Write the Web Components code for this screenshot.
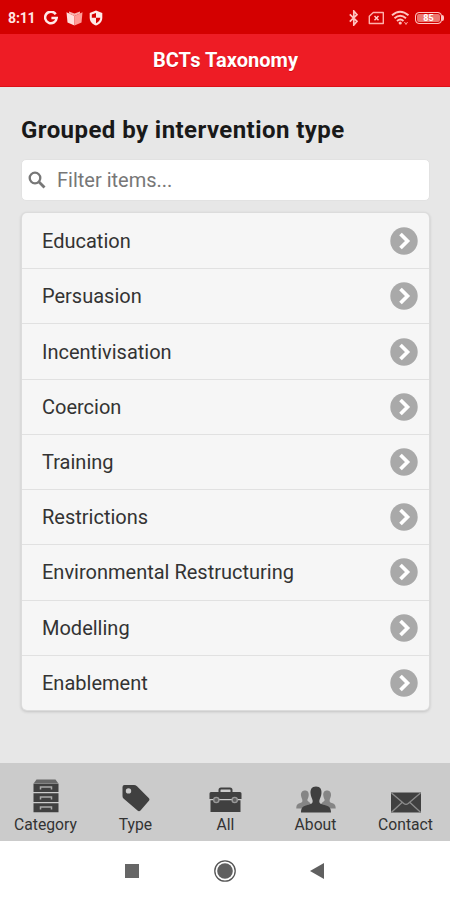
<!DOCTYPE html>
<html lang="en">
<head>
<meta charset="utf-8">
<title>BCTs Taxonomy</title>
<style>
html,body{margin:0;height:100%;background:#fff}
body{font-family:Roboto,"Liberation Sans",sans-serif;color:#333;overflow:hidden}
</style>
</head>
<body>
<taxonomy-app></taxonomy-app>
<script>
const define = (name, html) => customElements.define(name, class extends HTMLElement {
  constructor() {
    super();
    this.attachShadow({ mode: 'open' }).innerHTML = html;
  }
});

define('status-bar', `
<style>
:host{display:flex;height:34px;flex:none;box-sizing:border-box;background:#d40000;color:#ffe6e4;padding:1px 6px 0 8px;align-items:center;justify-content:space-between}
div{display:flex;align-items:center}
.time{font-size:14px;font-weight:700;width:28px;letter-spacing:-.15px;white-space:nowrap}
svg{display:block;flex:none}
.level{font:700 9px/10px Roboto,sans-serif;width:23px;height:10px;border:1.5px solid #ffc4c0;border-radius:4px;text-align:center;background:#ec7770;box-shadow:inset 0 0 0 1px #d40000;color:#fff}
.nub{width:2px;height:6px;background:#ffc4c0;border-radius:0 2px 2px 0}
</style>
<div>
 <span class="time">8:11</span>
 <svg style="margin-left:8px" width="14" height="14" viewBox="0 0 14 14"><path d="M11.700 3.200A5.800 5.800 0 1 0 12.700 7H7.400" fill="none" stroke="#ffe9e7" stroke-width="2.500"/></svg>
 <svg style="margin-left:8px" width="17" height="16" viewBox="0 0 17 16"><path d="M.5 2.300 8.500 6v9.500L1.500 12.400Z" fill="#ffe0dd"/><path d="M16.500 2.300 8.500 6v9.500l7-3.100Z" fill="#ff9c97"/><path d="m3 1.500 5.500 2 5.500-2v2L8.500 6 3 3.500Z" fill="#f9b1ac"/></svg>
 <svg style="margin-left:6px" width="14" height="16" viewBox="0 0 14 16"><path d="M7 .5 13.300 3v4.700c0 3.700-2.500 6.300-6.300 7.800C3.200 14 .7 11.400.7 7.700V3Z" fill="#ffe9e7"/><path d="M7 3v4.800H2.800V4.500ZM7 7.800h4.300c-.2 2.500-1.800 4.200-4.300 5.400Z" fill="#d40000"/></svg>
</div>
<div>
 <svg width="10" height="16" viewBox="0 0 10 16"><path d="m.8 4.300 7.200 7L4.800 15V1L8 4.700l-7.200 7" fill="none" stroke="#ffc4c0" stroke-width="1.700"/></svg>
 <svg style="margin-left:9px" width="17" height="14" viewBox="0 0 17 14"><path d="M5.300 1.500h10v11h-14V5.300Z" fill="none" stroke="#ffb0ab" stroke-width="1.400" stroke-linejoin="round"/><path d="m6.500 5 4 4.200m0-4.200-4 4.200" stroke="#ffd0cc" stroke-width="1.400"/></svg>
 <svg style="margin-left:6px" width="19" height="15" viewBox="0 0 19 15"><g fill="none" stroke="#ffc4c0" stroke-width="1.900"><path d="M1 5.300q8-7.300 16.500 0M3.500 8.200q5.700-5 11.500 0M6 11q3.200-3 6.500 0"/></g><circle cx="9.200" cy="13" r="1.600" fill="#ffc4c0"/><path d="m13.500 12 1.500 2.500 1.500-2.500" stroke="#ff9c97" fill="none" stroke-width="1"/></svg>
 <span class="level" style="margin-left:5px;width:25px">85</span><span class="nub"></span>
</div>`);

define('page-header', `
<style>
:host{display:flex;flex:none;height:53px;box-sizing:border-box;background:#ee1c25;border-bottom:1px solid #dc1118;color:#fff;align-items:center;justify-content:center;font-weight:700;font-size:20px;letter-spacing:.05px;text-shadow:0 1px 0 #d10b14}
span{margin-left:1px}
</style><span><slot></slot></span>`);

define('filter-box', `
<style>
:host{display:flex;height:42px;margin:0 -1px;box-sizing:border-box;border:1px solid #e2e2e2;border-radius:5px;background:#fff;align-items:center;color:#777;font-size:20px;padding:0 0 1px 6px}
svg{margin:0 11px 0 0;flex:none}
</style>
<svg width="18" height="18" viewBox="0 0 18 18"><circle cx="7" cy="7" r="5.300" fill="none" stroke="#777" stroke-width="2.300"/><path d="m10.800 10.800 5.700 5.700" stroke="#777" stroke-width="2.800"/></svg>
<slot></slot>`);

define('item-list', `
<style>
:host{display:grid;grid-auto-rows:1fr;height:497px;background:#f6f6f6;border-radius:5px;box-shadow:0 0 0 1px #dcdcdc,0 1px 3px 1px rgba(0,0,0,.16);overflow:hidden}
::slotted(list-item:not(:first-child)){border-top:1.500px solid #e1e1e1}
</style><slot></slot>`);

define('list-item', `
<style>
:host{display:flex;box-sizing:border-box;align-items:center;justify-content:space-between;padding:0 11px 0 20px;font-size:20px;color:#333}
svg{display:block;flex:none}
</style>
<span><slot></slot></span>
<svg width="28" height="28" viewBox="0 0 28 28"><circle cx="14" cy="14" r="13.700" fill="#a9a9a9"/><path d="m10.500 7 7 7-7 7" fill="none" stroke="#fff" stroke-width="3.700"/></svg>`);

define('tab-bar', `
<style>
:host{display:grid;grid-template-columns:repeat(5,1fr);height:78px;flex:none;background:#cbcbcb}
</style><slot></slot>`);

define('tab-item', `
<style>
:host{display:flex;flex-direction:column;align-items:center;justify-content:flex-end;padding:0 0 6px 1px;font-size:15.7px;line-height:20px;color:#333;white-space:nowrap}
.icon{height:40px;display:flex;align-items:flex-end;margin-bottom:2px}
</style>
<div class="icon"><slot name="icon"></slot></div><span><slot></slot></span>`);

define('system-nav', `
<style>
:host{display:flex;height:59px;flex:none;background:#fff;align-items:center;justify-content:center;gap:73px}
svg{display:block}
</style>
<svg width="16" height="16" viewBox="0 0 16 16"><path d="M1 1h14v14H1Z" fill="#666"/></svg>
<svg width="24" height="24" viewBox="0 0 24 24"><circle cx="12" cy="12" r="10.200" fill="none" stroke="#555" stroke-width="1.300"/><circle cx="12" cy="12" r="7.800" fill="#606060"/></svg>
<svg width="16" height="18" viewBox="0 0 16 18"><path d="M0 9 14 1v16Z" fill="#606060"/></svg>`);

define('taxonomy-app', `
<style>
:host{display:flex;flex-direction:column;width:450px;height:900px;background:#e7e7e7}
main{flex:1;padding:27px 21px 0 22px}
h1{margin:0 0 13px -1px;font-size:24px;letter-spacing:.43px;line-height:32px;font-weight:700;color:#191919;white-space:nowrap}
item-list{margin-top:12px}
</style>
<status-bar></status-bar>
<page-header>BCTs Taxonomy</page-header>
<main>
 <h1>Grouped by intervention type</h1>
 <filter-box>Filter items...</filter-box>
 <item-list>
  <list-item>Education</list-item><list-item>Persuasion</list-item><list-item>Incentivisation</list-item>
  <list-item>Coercion</list-item><list-item>Training</list-item><list-item>Restrictions</list-item>
  <list-item>Environmental Restructuring</list-item><list-item>Modelling</list-item><list-item>Enablement</list-item>
 </item-list>
</main>
<tab-bar>
 <tab-item>
  <svg slot="icon" width="26" height="34" viewBox="0 0 26 34"><path d="M3.500.5h19L25 4H1Z" fill="#686868"/><path d="M.5 4.500h25v8.500H.5Zm0 9.800h25v8.700H.5Zm0 10h25v9H.5Z" fill="#404040"/><g fill="none" stroke="#aaa" stroke-width="1.500"><path d="M7.500 10.500V8h11v2.500M7.500 20.500V18h11v2.500M7.500 30.500V28h11v2.500"/></g></svg>Category
 </tab-item>
 <tab-item>
  <svg slot="icon" width="28" height="29" viewBox="0 0 28 29"><path fill-rule="evenodd" d="M.5 3Q.5 1 2.500 1H12q1.500 0 3 1.300L26.700 14q1.500 1.500 0 3L18.500 26.500q-1.500 1.500-3 0L1.500 14.500Q.5 13.500.5 12ZM6.500 4.200a2.700 2.700 0 1 0 0 5.400 2.700 2.700 0 0 0 0-5.400Z" fill="#404040"/></svg>Type
 </tab-item>
 <tab-item>
  <svg slot="icon" width="33" height="26" viewBox="0 0 33 26"><path d="M10.500 5V3q0-1.500 1.500-1.500h9q1.500 0 1.500 1.500v2" fill="none" stroke="#404040" stroke-width="2"/><path d="M2 5h29q1.500 0 1.500 1.500V12h-6.200a3.800 3.800 0 0 0-1 0H7.700L.5 12V6.500Q.5 5 2 5ZM1.500 13.200h30V25h-30Z" fill="#404040"/><g fill="#606060" stroke="#999" stroke-width="1.400"><circle cx="7.300" cy="13" r="2.600"/><circle cx="25.700" cy="13" r="2.600"/></g></svg>All
 </tab-item>
 <tab-item>
  <svg slot="icon" width="40" height="27" viewBox="0 0 40 27"><g fill="#858585"><path d="M9 4.500c3 0 4 2.200 3.700 5-.2 2.200-1.200 3.300-1.400 4.600 0 1.700 4.700 2.200 4.700 8.400H.3c0-4.500 1.700-4.800 4-5.600 2-.7 2.300-1.400 2-3C6.200 12.500 5.200 11.500 5 9.500c-.3-2.800 1-5 4-5Z"/><path d="M31 4.500c-3 0-4 2.200-3.700 5 .2 2.200 1.200 3.300 1.400 4.600 0 1.700-4.700 2.200-4.700 8.400h15.700c0-4.500-1.700-4.800-4-5.600-2-.7-2.300-1.400-2-3 .1-1.400 1.100-2.400 1.300-4.400.3-2.800-1-5-4-5Z"/></g><path d="M20 .5c4.500 0 5.900 3.200 5.400 7.200-.2 2.800-1.700 4.800-2 6.800-.4 3 1.200 3.500 5.100 4.500 4.500 1.200 6.500 2.500 6.500 7.500H5c0-5 2-6.300 6.500-7.500 3.900-1 5.500-1.500 5.100-4.500-.3-2-1.800-4-2-6.800C14.100 3.700 15.500.5 20 .5Z" fill="#404040"/></svg>About
 </tab-item>
 <tab-item>
  <svg slot="icon" width="32" height="21" viewBox="0 0 32 21"><path d="M1 .5h30v20H1Z" fill="#404040"/><path d="m1.500 1 12.300 10.500q2.200 1.700 4.400 0L30.500 1M1.500 20.200l10.800-10m18.200 10-10.800-10" fill="none" stroke="#8c8c8c" stroke-width="1.300"/></svg>Contact
 </tab-item>
</tab-bar>
<system-nav></system-nav>`);
</script>
</body>
</html>
